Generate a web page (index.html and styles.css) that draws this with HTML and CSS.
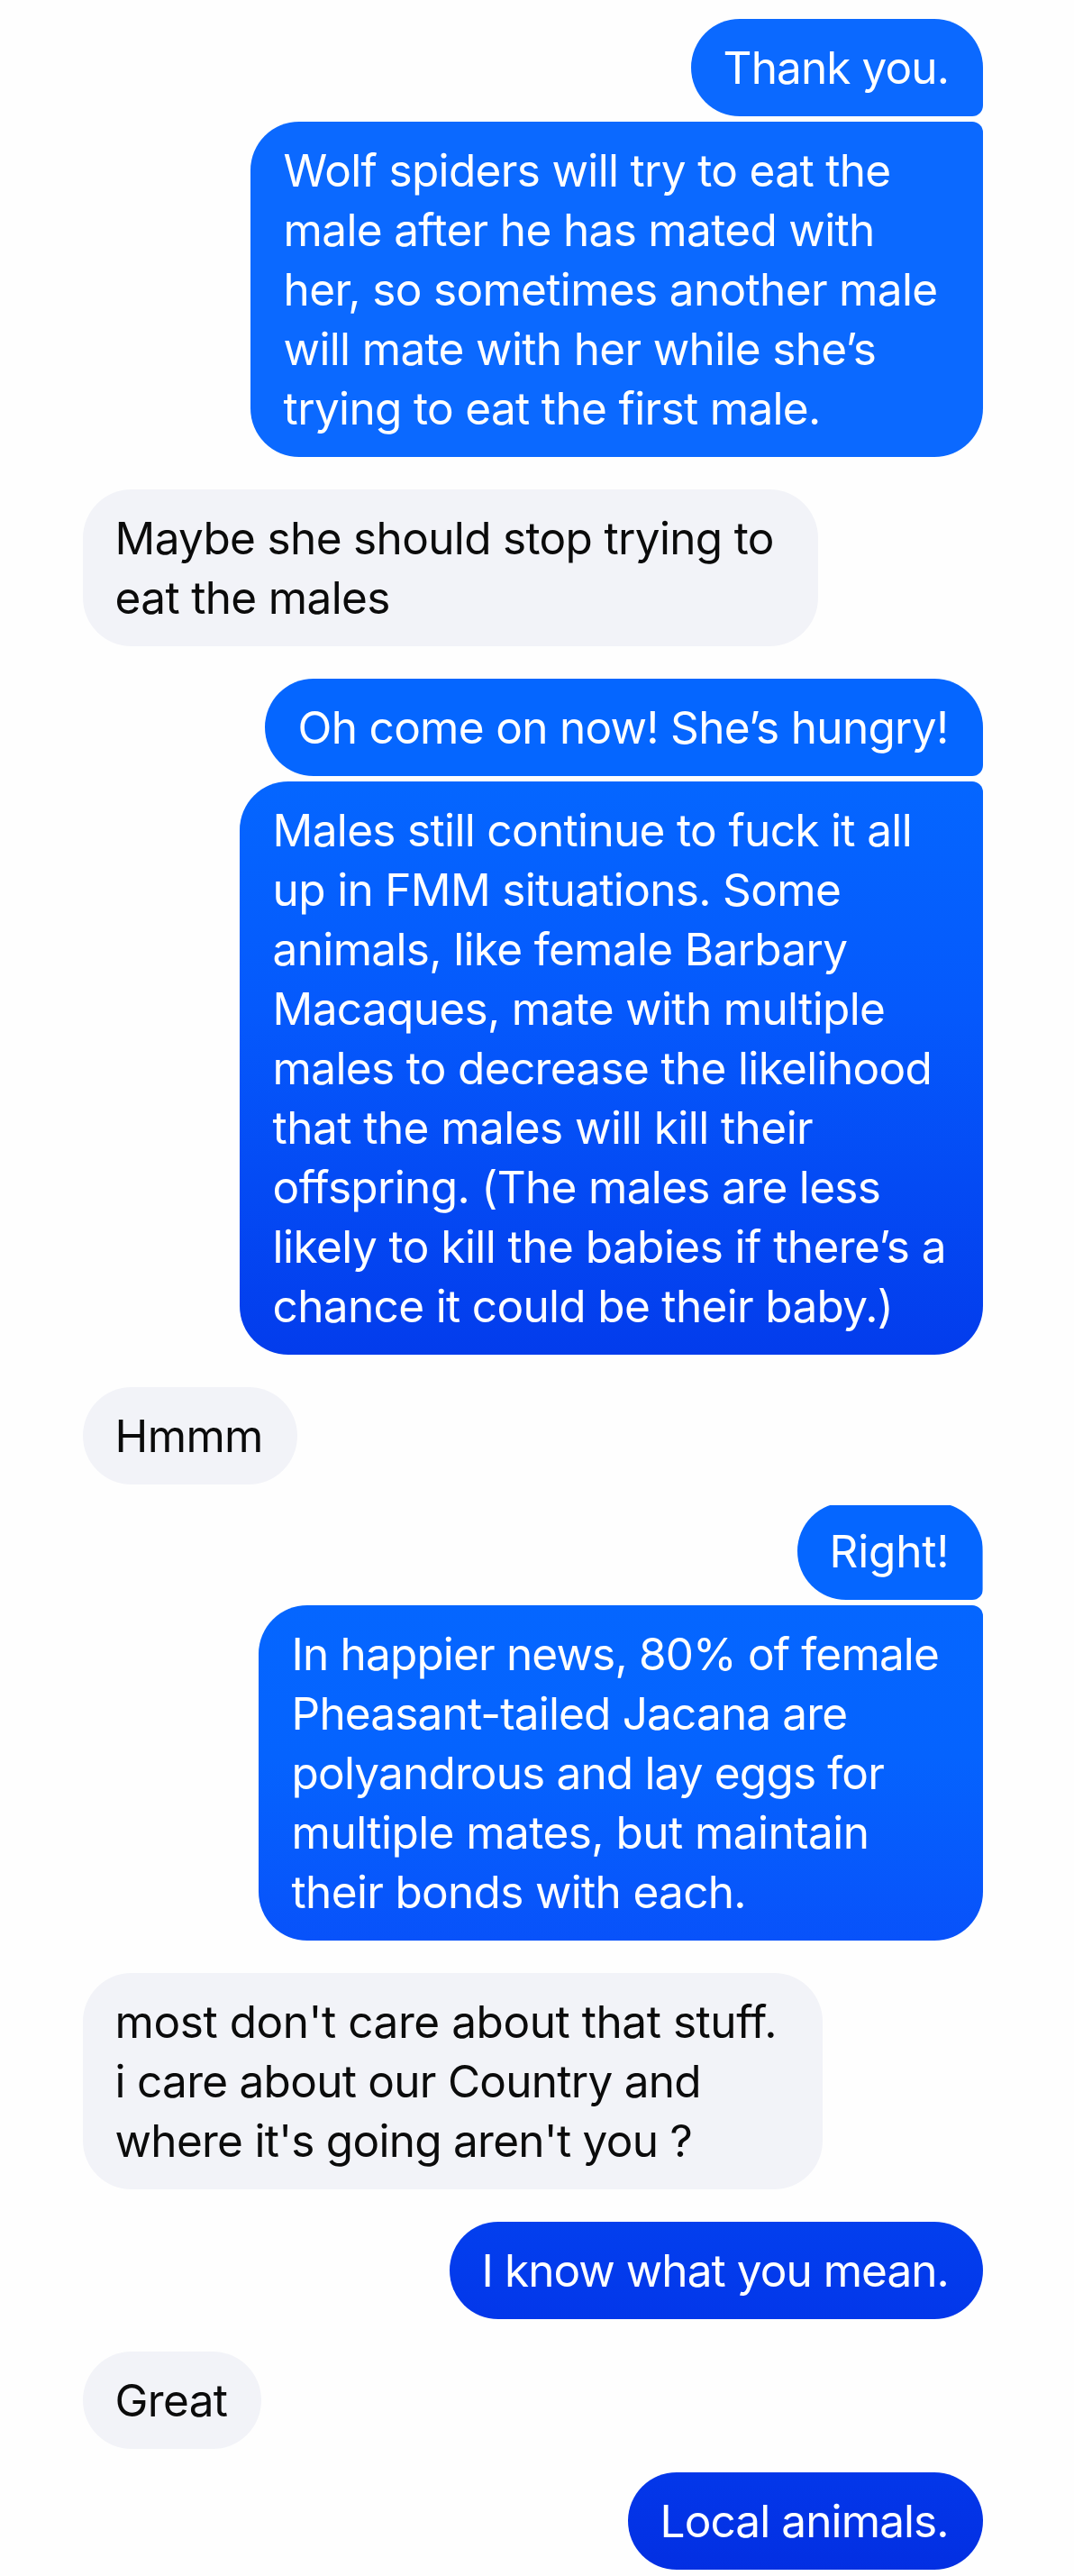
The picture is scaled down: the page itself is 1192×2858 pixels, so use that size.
FILE: index.html
```html
<!DOCTYPE html>
<html lang="en">
<head>
    <meta charset="UTF-8">
    <meta name="viewport" content="width=device-width, initial-scale=1.0">
    <title>Messages</title>
    <link rel="stylesheet" href="styles.css">
</head>
<body>
    <div class="chat">
        <div class="group sent">
            <div class="bubble thanks first">Thank you.</div>
            <div class="bubble spiders last">Wolf spiders will try to eat the<br>male after he has mated with<br>her, so sometimes another male<br>will mate with her while she’s<br>trying to eat the first male.</div>
        </div>
        <div class="group received">
            <div class="bubble maybe">Maybe she should stop trying to<br>eat the males</div>
        </div>
        <div class="group sent">
            <div class="bubble hungry first">Oh come on now! She’s hungry!</div>
            <div class="bubble macaques last">Males still continue to fuck it all<br>up in FMM situations. Some<br>animals, like female Barbary<br>Macaques, mate with multiple<br>males to decrease the likelihood<br><span class="loose">that the males will kill their</span><br>offspring. (The males are less<br><span class="loose">likely to kill the babies if there’s a</span><br>chance it could be their baby.)</div>
        </div>
        <div class="group received">
            <div class="bubble hmmm">Hmmm</div>
        </div>
        <div class="group sent cut">
            <div class="bubble right first">Right!</div>
            <div class="bubble jacana last">In happier news, 80% of female<br>Pheasant-tailed Jacana are<br>polyandrous and lay eggs for<br><span class="loose">multiple mates, but maintain</span><br><span class="tight">their bonds with each.</span></div>
        </div>
        <div class="group received">
            <div class="bubble country"><span class="looser">most don't care about that stuff.</span><br>i care about our Country and<br>where it's going aren't you ?</div>
        </div>
        <div class="group sent">
            <div class="bubble know">I know what you mean.</div>
        </div>
        <div class="group received">
            <div class="bubble great">Great</div>
        </div>
        <div class="group sent closing">
            <div class="bubble local">Local animals.</div>
        </div>
    </div>
</body>
</html>
```
FILE: styles.css
```css
* {
    box-sizing: border-box;
}

body {
    margin: 0;
    background: #fefefe;
    font-family: Inter, "Liberation Sans", sans-serif;
}

.chat {
    width: 1192px;
    height: 2858px;
    padding: 21px 101.4px 0 91.6px;
    display: flex;
    flex-direction: column;
    gap: 36px;
    overflow: hidden;
}

.group {
    display: flex;
    flex-direction: column;
    gap: 6px;
}

.sent {
    align-items: flex-end;
}

.received {
    align-items: flex-start;
}

.bubble {
    padding: 21px 0 21px 37px;
    border-radius: 54px;
    font-size: 49.5px;
    line-height: 66px;
    letter-spacing: -0.66px;
    white-space: nowrap;
}

.sent .bubble {
    background: #0b69ff;
    color: #fff;
}

.received .bubble {
    padding-left: 36px;
    background: #f2f3f8;
    color: #0b0b0b;
}

.sent .first {
    border-bottom-right-radius: 12px;
}

.sent .last {
    border-top-right-radius: 12px;
}

.sent .thanks {
    width: 324px;
    padding-left: 36px;
    letter-spacing: -0.9px;
}

.spiders {
    width: 813px;
}

.maybe {
    width: 816px;
}

.sent .hungry {
    width: 797px;
    letter-spacing: -0.7px;
    background: #0566ff;
}

.sent .macaques {
    width: 825px;
    background: linear-gradient(#0566ff, #0559fc 40%, #033cec);
}

.hmmm {
    width: 238px;
}

.cut {
    margin-top: -16px;
}

/* the top edge of this bubble is cut flat */
.sent .right {
    width: 206px;
    padding-left: 36px;
    clip-path: inset(3px 0 0 0);
    letter-spacing: -0.2px;
    background: #0566ff;
}

.sent .jacana {
    width: 804px;
    letter-spacing: -0.84px;
    background: linear-gradient(#0566ff, #0563fe 45%, #0852fa);
}

.bubble .loose {
    letter-spacing: -0.55px;
}

.bubble .tight {
    letter-spacing: -0.68px;
}

.country {
    width: 821px;
    letter-spacing: -0.73px;
}

.country .looser {
    letter-spacing: -0.44px;
}

.sent .know {
    width: 592px;
    padding-left: 36px;
    letter-spacing: -0.95px;
    background: linear-gradient(#033fee, #0337ea);
}

.great {
    width: 198px;
}

.closing {
    margin-top: -10px;
}

.sent .local {
    width: 394px;
    padding-left: 36px;
    letter-spacing: -0.9px;
    background: linear-gradient(#0337ea, #032fe2);
}
```
